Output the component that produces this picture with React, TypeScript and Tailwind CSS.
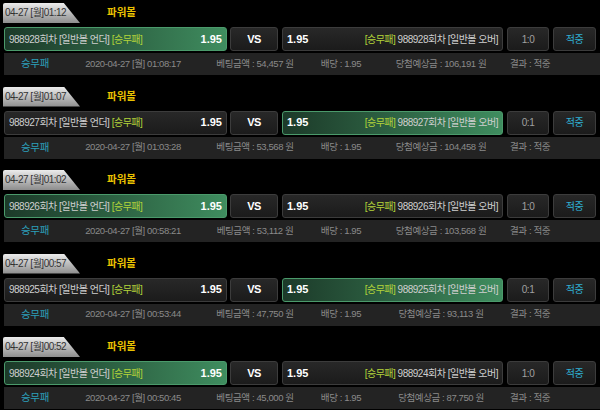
const rounds = [
  { time: "01:12", no: "988928", pick: "under", score: "1:0", at: "01:08:17", bet: "54,457", win: "106,191" },
  { time: "01:07", no: "988927", pick: "over", score: "0:1", at: "01:03:28", bet: "53,568", win: "104,458" },
  { time: "01:02", no: "988926", pick: "under", score: "1:0", at: "00:58:21", bet: "53,112", win: "103,568" },
  { time: "00:57", no: "988925", pick: "over", score: "0:1", at: "00:53:44", bet: "47,750", win: "93,113" },
  { time: "00:52", no: "988924", pick: "under", score: "1:0", at: "00:50:45", bet: "45,000", win: "87,750" },
];

const on = "border-[#4b9a6b] bg-gradient-to-r from-[#1c3a29] to-[#3f8d5f]";
const off = "border-[#3c3c3c] bg-gradient-to-b from-[#282828] to-[#1b1b1b]";

function Round({ r }: { r: (typeof rounds)[number] }) {
  const left = r.pick === "under";
  return (
    <div className="pt-[3px] pb-[8.5px]">
      <div className="flex items-center h-5">
        <div className="ml-[3px] w-[77px] h-5 bg-gradient-to-b from-[#ececec] to-[#8e8e8e] [clip-path:polygon(0_0,79%_0,100%_100%,0_100%)] rounded-tl-[2px] pl-[2px] text-[10px] leading-5 text-[#333] whitespace-nowrap tracking-[-0.5px]">
          04-27 [월]{r.time}
        </div>
        <div className="ml-[27px] text-[10.5px] font-bold text-[#e9c200]">파워볼</div>
      </div>

      <div className="flex mt-1 h-6 pl-1 gap-[3px] text-[10px] tracking-[-0.5px] whitespace-nowrap">
        <div className={`w-[223px] flex items-center justify-between px-[4px] rounded-[3px] border ${left ? on : off}`}>
          <span className="text-[#cfcfcf]">
            {r.no}회차 [일반볼 언더] <span className="text-[#b3d43a]">[승무패]</span>
          </span>
          <span className="font-bold text-white text-[11px] tracking-normal">1.95</span>
        </div>
        <div className={`w-[48px] flex items-center justify-center rounded-[3px] border ${off} font-bold text-white text-[11px]`}>VS</div>
        <div className={`ml-[1px] w-[221px] flex items-center justify-between px-[4px] rounded-[3px] border ${left ? off : on}`}>
          <span className="font-bold text-white text-[11px] tracking-normal">1.95</span>
          <span className="text-[#cfcfcf]">
            <span className="text-[#b3d43a]">[승무패]</span> {r.no}회차 [일반볼 오버]
          </span>
        </div>
        <div className={`ml-[1px] w-[42px] flex items-center justify-center rounded-[3px] border ${off} text-[#a0a0a0]`}>{r.score}</div>
        <div className={`ml-[1px] w-[43px] flex items-center justify-center rounded-[3px] border ${off} text-[#2fb0d3]`}>적중</div>
      </div>

      <div className="flex items-center mt-[2px] ml-1 h-[22px] bg-[#232323] text-[9.5px] text-[#8a8a8a] whitespace-nowrap tracking-[-0.4px]">
        <div className="w-[62px] text-center text-[#2c9fb9] text-[10.5px]">승무패</div>
        <div className="w-[134px] text-center">2020-04-27 [월] {r.at}</div>
        <div className="w-[110px] text-center">베팅금액 : {r.bet} 원</div>
        <div className="w-[62px] text-center">배당 : 1.95</div>
        <div className="w-[138px] text-center">당첨예상금 : {r.win} 원</div>
        <div className="w-[40px] text-center">결과 : 적중</div>
      </div>
    </div>
  );
}

export default function App() {
  return (
    <div className="w-[600px] h-[410px] overflow-hidden bg-black font-['Liberation_Sans','Noto_Sans_CJK_KR',sans-serif]">
      {rounds.map((r) => (
        <Round key={r.no} r={r} />
      ))}
    </div>
  );
}
